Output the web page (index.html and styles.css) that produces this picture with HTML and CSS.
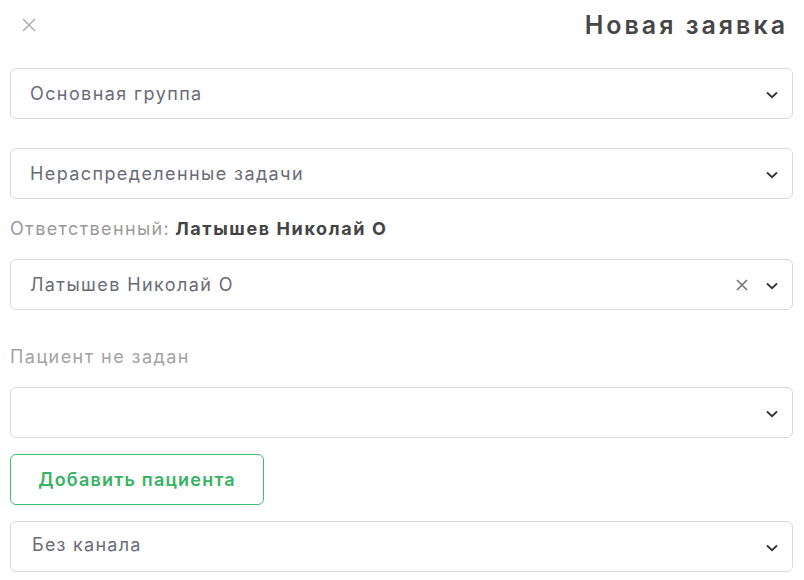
FILE: index.html
```html
<!DOCTYPE html>
<html lang="ru">
<head>
<meta charset="utf-8">
<link rel="stylesheet" href="styles.css">
</head>
<body>
<div class="panel">
  <header class="head">
    <button class="close" aria-label="Закрыть">
      <svg width="14" height="14" viewBox="0 0 14 14"><path d="M1 1L13 13M13 1L1 13" stroke="#a8a8a8" stroke-width="1.4" fill="none"/></svg>
    </button>
    <h1 class="title">Новая заявка</h1>
  </header>

  <div class="select s1">
    <span class="val">Основная группа</span>
    <span class="icons"><svg class="chev" width="12" height="8" viewBox="0 0 12 8"><path d="M1 1.5L6 6.2L11 1.5" stroke="#333" stroke-width="1.8" fill="none"/></svg></span>
  </div>

  <div class="select s2">
    <span class="val">Нераспределенные задачи</span>
    <span class="icons"><svg class="chev" width="12" height="8" viewBox="0 0 12 8"><path d="M1 1.5L6 6.2L11 1.5" stroke="#333" stroke-width="1.8" fill="none"/></svg></span>
  </div>

  <div class="resp"><span class="muted">Ответственный:</span> <b class="name">Латышев Николай О</b></div>

  <div class="select s3">
    <span class="val">Латышев Николай О</span>
    <span class="icons">
      <svg class="clear" width="12" height="12" viewBox="0 0 12 12"><path d="M1 1L11 11M11 1L1 11" stroke="#6e6e78" stroke-width="1.5" fill="none"/></svg>
      <svg class="chev" width="12" height="8" viewBox="0 0 12 8"><path d="M1 1.5L6 6.2L11 1.5" stroke="#333" stroke-width="1.8" fill="none"/></svg>
    </span>
  </div>

  <div class="patient">Пациент не задан</div>

  <div class="select s4">
    <span class="val"></span>
    <span class="icons"><svg class="chev" width="12" height="8" viewBox="0 0 12 8"><path d="M1 1.5L6 6.2L11 1.5" stroke="#333" stroke-width="1.8" fill="none"/></svg></span>
  </div>

  <button class="add">Добавить пациента</button>

  <div class="select s5">
    <span class="val up">Без канала</span>
    <span class="icons"><svg class="chev" width="12" height="8" viewBox="0 0 12 8"><path d="M1 1.5L6 6.2L11 1.5" stroke="#333" stroke-width="1.8" fill="none"/></svg></span>
  </div>
</div>
</body>
</html>
```

FILE: styles.css
```css
* { box-sizing: border-box; }
html, body { margin: 0; padding: 0; background: #fff; }
body {
  font-family: Inter, "Noto Sans", "Liberation Sans", sans-serif;
  color: #444;
  width: 804px;
  height: 580px;
  overflow: hidden;
}
.panel {
  padding: 0 11px 0 10px;
  display: flex;
  flex-direction: column;
}
.head {
  height: 50px;
  display: flex;
  align-items: center;
  justify-content: space-between;
  margin-bottom: 18px;
}
.close {
  border: 0;
  background: none;
  padding: 0;
  margin-left: 12px;
  width: 14px;
  height: 14px;
  display: flex;
}
.title {
  margin: 0;
  font-size: 25px;
  font-weight: 600;
  color: #464646;
  letter-spacing: 3px;
  margin-right: 5px;
}
.select {
  height: 51px;
  border: 1px solid #d9d9e0;
  border-radius: 6px;
  display: flex;
  align-items: center;
  justify-content: space-between;
  padding: 0 14px 0 19px;
}
.val {
  font-size: 18px;
  color: #6b6b78;
  letter-spacing: 1.4px;
}
.val.up { margin-top: -5px; padding-left: 2px; letter-spacing: 1.25px; }
.icons {
  display: flex;
  align-items: center;
  gap: 18px;
}
.chev { display: block; margin-top: 2px; }
.clear { display: block; }
.s2 { margin-top: 29px; }
.resp {
  margin-top: 17px;
  line-height: 26px;
  font-size: 18px;
}
.muted { color: #9a9a9a; letter-spacing: 1.35px; }
.name { font-weight: 700; color: #444; letter-spacing: 1.6px; }
.s3 { margin-top: 17px; }
.patient {
  margin-top: 35px;
  line-height: 24px;
  font-size: 18px;
  color: #a3a3a3;
  letter-spacing: 1.45px;
}
.s4 { margin-top: 18px; }
.add {
  margin-top: 16px;
  width: 254px;
  height: 51px;
  border: 1px solid #3fbd6e;
  border-radius: 6px;
  background: #fff;
  color: #36b463;
  font-family: inherit;
  font-size: 18px;
  font-weight: 600;
  letter-spacing: 1.2px;
  padding: 0;
  align-self: flex-start;
}
.s5 { margin-top: 16px; }
```
